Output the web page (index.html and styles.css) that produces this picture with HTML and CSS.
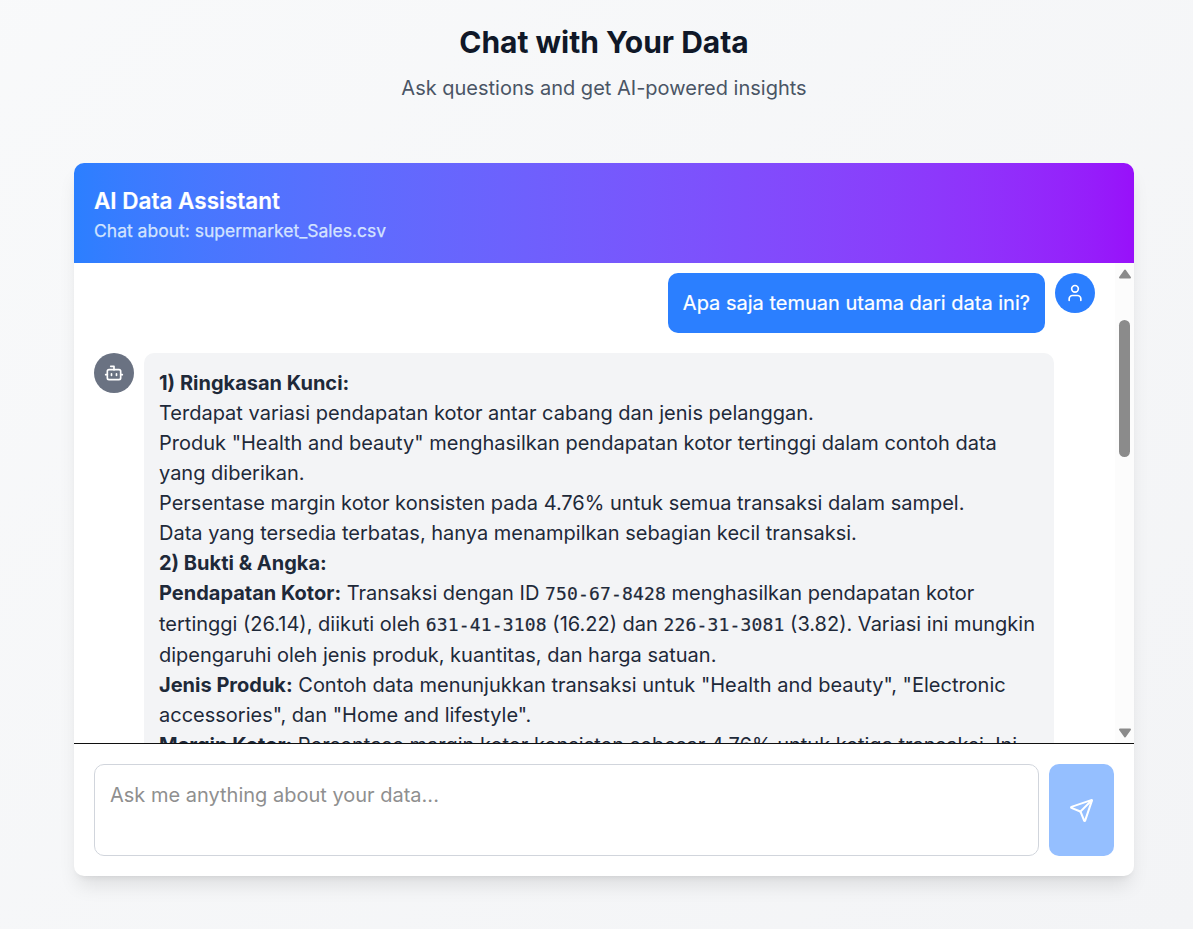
FILE: index.html
```html
<!DOCTYPE html>
<html lang="id">
<head>
<meta charset="utf-8">
<title>Chat with Your Data</title>
<link rel="stylesheet" href="styles.css">
</head>
<body>
<header class="intro">
  <h1>Chat with Your Data</h1>
  <p>Ask questions and get AI-powered insights</p>
</header>
<main class="card">
  <div class="card-head">
    <h2>AI Data Assistant</h2>
    <p>Chat about: supermarket_Sales.csv</p>
  </div>
  <div class="log">
    <div class="messages">
      <div class="row user">
        <div class="bubble bubble-user">Apa saja temuan utama dari data ini?</div>
        <div class="avatar avatar-user"><svg viewBox="0 0 24 24"><path d="M19 21v-2a4 4 0 0 0-4-4H9a4 4 0 0 0-4 4v2"/><circle cx="12" cy="7" r="4"/></svg></div>
      </div>
      <div class="row">
        <div class="avatar avatar-bot"><svg viewBox="0 0 24 24"><path d="M12 8V4H8"/><rect width="16" height="12" x="4" y="8" rx="2"/><path d="M2 14h2M20 14h2M15 13v2M9 13v2"/></svg></div>
        <div class="bubble bubble-bot">
          <p><strong>1) Ringkasan Kunci:</strong></p>
          <p>Terdapat variasi pendapatan kotor antar cabang dan jenis pelanggan.</p>
          <p>Produk "Health and beauty" menghasilkan pendapatan kotor tertinggi dalam contoh data yang diberikan.</p>
          <p>Persentase margin kotor konsisten pada 4.76% untuk semua transaksi dalam sampel.</p>
          <p>Data yang tersedia terbatas, hanya menampilkan sebagian kecil transaksi.</p>
          <p><strong>2) Bukti &amp; Angka:</strong></p>
          <p><strong>Pendapatan Kotor:</strong> Transaksi dengan ID <code>750-67-8428</code> menghasilkan pendapatan kotor tertinggi (26.14), diikuti oleh <code>631-41-3108</code> (16.22) dan <code>226-31-3081</code> (3.82). Variasi ini mungkin dipengaruhi oleh jenis produk, kuantitas, dan harga satuan.</p>
          <p><strong>Jenis Produk:</strong> Contoh data menunjukkan transaksi untuk "Health and beauty", "Electronic accessories", dan "Home and lifestyle".</p>
          <p><strong>Margin Kotor:</strong> Persentase margin kotor konsisten sebesar 4.76% untuk ketiga transaksi. Ini</p>
        </div>
      </div>
    </div>
    <div class="scrollbar">
      <svg class="arrow" viewBox="0 0 14 10"><path d="M7 1.5 12 8.5H2Z"/></svg>
      <div class="thumb"></div>
      <svg class="arrow arrow-down" viewBox="0 0 14 10"><path d="M2 1.5H12L7 8.5Z"/></svg>
    </div>
  </div>
  <form class="composer">
    <textarea placeholder="Ask me anything about your data..."></textarea>
    <button type="button" aria-label="Send"><svg viewBox="0 0 24 24"><path d="M14.536 21.686a.5.5 0 0 0 .937-.024l6.5-19a.496.496 0 0 0-.635-.635l-19 6.5a.5.5 0 0 0-.024.937l7.93 3.18a2 2 0 0 1 1.112 1.11z"/><path d="m21.854 2.147-10.94 10.939"/></svg></button>
  </form>
</main>
</body>
</html>
```
FILE: styles.css
```css
* { box-sizing: border-box; margin: 0; padding: 0; }
html { height: 100%; overflow: hidden; }
body {
  height: 929px;
  overflow: hidden;
  padding: 20px 59px 0 74px;
  font-family: Inter, "Liberation Sans", sans-serif;
  font-size: 20px;
  line-height: 30px;
  background: linear-gradient(135deg, #f9fafb -15%, #f3f4f6);
}
.intro { height: 143px; text-align: center; }
.intro h1 { font-size: 30px; line-height: 45px; font-weight: 700; color: #101828; }
.intro p { margin-top: 8px; color: #4a5565; }
.card {
  width: 1060px;
  height: 713px;
  display: flex;
  flex-direction: column;
  overflow: hidden;
  border-radius: 10px;
  background: #fff;
  box-shadow: 0 12.5px 19px -4px rgba(0,0,0,.1), 0 5px 7.5px -5px rgba(0,0,0,.1);
}
.card-head {
  height: 100px;
  padding: 20px;
  color: #fff;
  background: linear-gradient(to right in oklab, #2b7fff, #9810fa);
}
.card-head h2 { font-size: 22.5px; line-height: 35px; font-weight: 600; -webkit-text-stroke: .2px; }
.card-head p { font-size: 17.5px; line-height: 25px; color: #dbeafe; opacity: .95; -webkit-text-stroke: .25px; }
.log { height: 480px; display: flex; overflow: hidden; }
.messages { flex: 1; padding: 10px 20px 0; }
.row { display: flex; gap: 10px; }
.user { justify-content: flex-end; margin-bottom: 20px; }
.bubble { border-radius: 10px; padding: 15px; }
.bubble-user { background: #2b7fff; color: #fff; -webkit-text-stroke: .2px; }
.bubble-bot { width: 910px; background: #f3f4f6; color: #1e2939; }
.bubble strong { font-weight: 700; }
.bubble code {
  font-family: "DejaVu Sans Mono", monospace;
  font-size: 18px;
  letter-spacing: .16px;
  -webkit-text-stroke: .2px;
}
.avatar {
  width: 40px;
  height: 40px;
  flex: none;
  display: flex;
  align-items: center;
  justify-content: center;
  border-radius: 50%;
}
.avatar-user { background: #2b7fff; }
.avatar-bot { background: #6a7282; }
svg { fill: none; stroke: #fff; stroke-width: 2; stroke-linecap: round; stroke-linejoin: round; }
.avatar svg { width: 20px; height: 20px; }
.scrollbar {
  width: 19px;
  padding: 6px 3px 5px;
  display: flex;
  flex-direction: column;
  align-items: center;
  background: #fcfcfc;
}
.arrow { width: 14px; height: 10px; flex: none; fill: #8b8b8b; stroke: #8b8b8b; stroke-width: 2; }
.thumb { width: 11px; height: 137px; margin-top: 41px; border-radius: 6px; background: #8b8b8b; }
.arrow-down { margin-top: auto; }
.composer {
  flex: 1;
  display: flex;
  gap: 10px;
  padding: 20px;
  border-top: 1px solid #101010;
}
.composer textarea {
  flex: 1;
  height: 92px;
  padding: 15px;
  border: 1px solid #d1d5dc;
  border-radius: 10px;
  resize: none;
  font: inherit;
}
.composer textarea::placeholder { color: #8f8f8f; }
.composer button {
  width: 65px;
  height: 92px;
  display: flex;
  align-items: center;
  justify-content: center;
  border: 0;
  border-radius: 10px;
  background: #95bfff;
}
.composer button svg { width: 25px; height: 25px; }
```
